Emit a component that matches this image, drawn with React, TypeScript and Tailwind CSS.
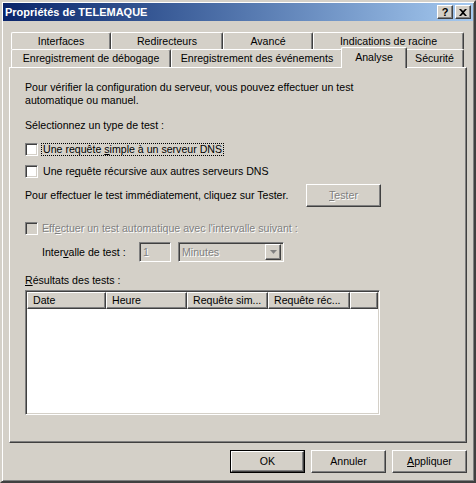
import React from 'react';

const raised =
  'border border-t-white border-l-white border-r-[#404040] border-b-[#404040] shadow-[inset_-1px_-1px_0_#808080] bg-[#d4d0c8]';
const sunken =
  'border border-t-[#808080] border-l-[#808080] border-r-white border-b-white shadow-[inset_1px_1px_0_#404040,inset_-1px_-1px_0_#d4d0c8]';
const dim = 'text-[#808080] [text-shadow:1px_1px_0_#ffffff]';

const Tab = ({ label, className }: { label: string; className: string }) => (
  <div
    className={`flex items-center justify-center border-l border-t border-r border-l-white border-t-white border-r-[#404040] rounded-t-[2px] shadow-[inset_-1px_0_0_#808080] bg-[#d4d0c8] whitespace-nowrap ${className}`}
  >
    {label}
  </div>
);

const Checkbox = ({ disabled }: { disabled?: boolean }) => (
  <div className={`w-[13px] h-[13px] shrink-0 ${sunken} ${disabled ? 'bg-[#d4d0c8]' : 'bg-white'}`} />
);

const Button = ({ children, className = '' }: { children: React.ReactNode; className?: string }) => (
  <div className={`w-[75px] h-[23px] flex items-center justify-center ${raised} ${className}`}>{children}</div>
);

const HeaderCell = ({ label, className }: { label: string; className: string }) => (
  <div className={`h-full flex items-center pl-[5px] whitespace-nowrap overflow-hidden ${raised} ${className}`}>{label}</div>
);

export default function App() {
  return (
    <div className="w-[476px] h-[483px] bg-[#d4d0c8] border-2 border-t-[#d4d0c8] border-l-[#d4d0c8] border-r-[#404040] border-b-[#404040] shadow-[inset_1px_1px_0_#ffffff,inset_-1px_-1px_0_#808080] p-[1px] font-['Liberation_Sans',Arial,sans-serif] text-[10.6px] leading-[13px] text-black select-none">
      {/* title bar */}
      <div className="h-[18px] flex items-center justify-between pl-[2px] pr-[2px] bg-gradient-to-r from-[#0a246a] to-[#a6caf0]">
        <span className="text-white font-bold text-[11px]">Propriétés de TELEMAQUE</span>
        <div className="flex gap-[2px]">
          <div className={`w-[16px] h-[14px] flex items-center justify-center font-bold text-[11px] leading-none ${raised}`}>?</div>
          <div className={`w-[16px] h-[14px] flex items-center justify-center ${raised}`}>
            <svg width="8" height="7" viewBox="0 0 8 7">
              <path d="M0 0h2l2 2 2-2h2L5 3.5 8 7H6L4 5 2 7H0l3-3.5z" fill="#000" />
            </svg>
          </div>
        </div>
      </div>

      <div className="pl-[6px] pt-[11px]">
        <div className="flex ml-[2px] h-[17px]">
          <Tab label="Interfaces" className="w-[100px] h-full" />
          <Tab label="Redirecteurs" className="w-[112px] h-full" />
          <Tab label="Avancé" className="w-[90px] h-full" />
          <Tab label="Indications de racine" className="w-[151px] h-full" />
        </div>
        <div className="flex ml-[2px] h-[18px] items-start">
          <Tab label="Enregistrement de débogage" className="w-[160px] h-full" />
          <Tab label="Enregistrement des événements" className="w-[172px] h-full" />
          <Tab label="Analyse" className="relative z-10 w-[66px] h-[21px] -mt-[2px] -mx-[2px] pb-[2px]" />
          <Tab label="Sécurité" className="w-[59px] h-full" />
        </div>

        {/* panel */}
        <div className="w-[458px] h-[376px] border border-t-white border-l-white border-r-[#404040] border-b-[#404040] shadow-[inset_-1px_-1px_0_#808080] pl-[15px] pt-[13px]">
          <div className="w-[356px] flex flex-col">
            <p>
              Pour vérifier la configuration du serveur, vous pouvez effectuer un test
              <br />
              automatique ou manuel.
            </p>
            <p className="mt-[12px]">Sélectionnez un type de test :</p>

            <div className="mt-[11px] flex items-center h-[13px]">
              <Checkbox />
              <span className="ml-[3px] px-[1px] border border-dotted border-black leading-[11px] h-[13px]">
                Une requête <span className="underline">s</span>imple à un serveur DNS
              </span>
            </div>
            <div className="mt-[9px] flex items-center h-[13px]">
              <Checkbox />
              <span className="ml-[3px] px-[1px] border border-transparent leading-[11px] h-[13px]">
                Une re<span className="underline">q</span>uête récursive aux autres serveurs DNS
              </span>
            </div>

            <div className="mt-[6px] flex items-center h-[23px]">
              <span>Pour effectuer le test immédiatement, cliquez sur Tester.</span>
              <Button className="ml-auto">
                <span className={dim}>
                  <span className="underline">T</span>ester
                </span>
              </Button>
            </div>

            <div className={`mt-[15px] flex items-center h-[13px]`}>
              <Checkbox disabled />
              <span className={`ml-[4px] ${dim}`}>
                Eff<span className="underline">e</span>ctuer un test automatique avec l'intervalle suivant :
              </span>
            </div>

            <div className="mt-[7px] flex items-center h-[20px] pl-[17px]">
              <span className="w-[97px]">
                Inter<span className="underline">v</span>alle de test :
              </span>
              <div className={`w-[32px] h-[20px] flex items-center pl-[3px] bg-[#d4d0c8] ${sunken}`}>
                <span className={dim}>1</span>
              </div>
              <div className={`ml-[7px] w-[106px] h-[20px] flex items-center justify-between pl-[3px] pr-[2px] bg-[#d4d0c8] ${sunken}`}>
                <span className={dim}>Minutes</span>
                <div className={`w-[16px] h-[16px] flex items-center justify-center ${raised}`}>
                  <svg width="7" height="5" viewBox="0 0 7 5">
                    <path d="M1 1h5L3.5 4z" fill="#ffffff" />
                    <path d="M0 0h7L3.5 4z" fill="#808080" />
                  </svg>
                </div>
              </div>
            </div>

            <p className="mt-[12px]">
              <span className="underline">R</span>ésultats des tests :
            </p>

            <div className={`mt-[3px] w-[355px] h-[125px] bg-white p-[1px] ${sunken}`}>
              <div className="flex h-[17px]">
                <HeaderCell label="Date" className="w-[79px]" />
                <HeaderCell label="Heure" className="w-[81px]" />
                <HeaderCell label="Requête sim..." className="w-[81px]" />
                <HeaderCell label="Requête réc..." className="w-[82px]" />
                <HeaderCell label="" className="flex-1" />
              </div>
            </div>
          </div>
        </div>

        {/* buttons */}
        <div className="mt-[7px] w-[458px] flex justify-end gap-[6px]">
          <div className="w-[75px] h-[23px] border border-black">
            <div className={`w-full h-full flex items-center justify-center ${raised}`}>OK</div>
          </div>
          <Button>Annuler</Button>
          <Button>
            <span>
              <span className="underline">A</span>ppliquer
            </span>
          </Button>
        </div>
      </div>
    </div>
  );
}
